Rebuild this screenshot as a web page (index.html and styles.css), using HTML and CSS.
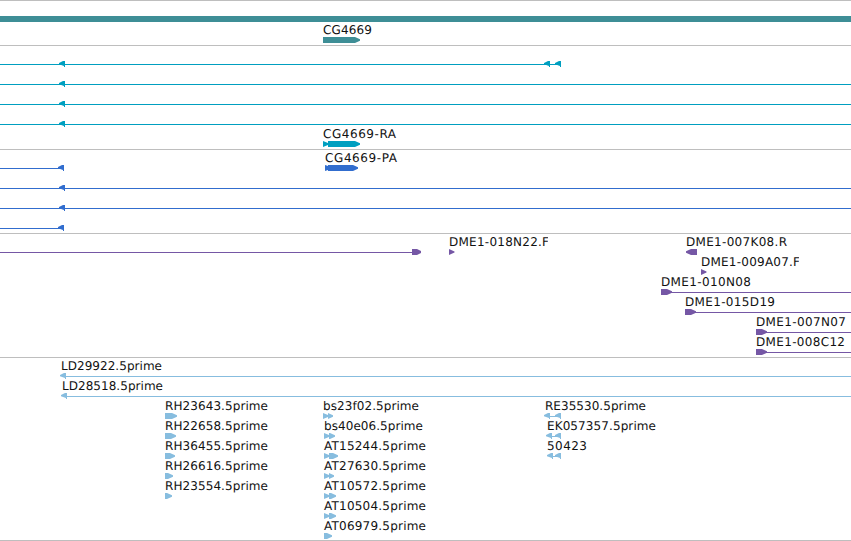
FILE: index.html
```
<!DOCTYPE html>
<html lang="en">
<head>
  <meta charset="UTF-8">
  <title>CG4669 region</title>
  <link rel="stylesheet" href="styles.css">
</head>
<body>
  <!-- exon ends, shared by all the tracks -->
  <svg class="defs" width="0" height="0">
    <defs>
      <path id="left" d="M0 2 L3 .5 L4 0 H6 V6 H5 V5 L0 3.3Z"/>
      <path id="right" d="M0 0 L5.5 2.5 V3.5 L0 6Z"/>
      <path id="box" d="M0 0 H6 L11 2.2 V3.8 L6 6 H0Z"/>
      <clipPath id="clip1"><rect x="440" y="234" width="108" height="16"/></clipPath>
      <clipPath id="clip2"><rect x="690" y="254" width="109" height="16"/></clipPath>
    </defs>
  </svg>

  <main class="tracks">
    <!-- genes -->
    <section class="track gene">
      <svg width="851" height="44" viewBox="0 1 851 44">
        <rect x="0" y="16" width="851" height="6"/>
        <text x="323" y="34" textLength="49">CG4669</text>
        <path d="M323 37 H355 L360 39.2 V40.8 L355 43 H323Z"/>
      </svg>
    </section>

    <!-- transcripts -->
    <section class="track transcript">
      <svg width="851" height="103" viewBox="0 46 851 103">
        <rect x="0" y="64" width="561" height="1"/>
        <rect x="0" y="84" width="851" height="1"/>
        <rect x="0" y="104" width="851" height="1"/>
        <rect x="0" y="124" width="851" height="1"/>
        <use href="#left" x="59" y="61"/>
        <use href="#left" x="544" y="61"/>
        <use href="#left" x="555" y="61"/>
        <use href="#left" x="59" y="81"/>
        <use href="#left" x="59" y="101"/>
        <use href="#left" x="59" y="121"/>
        <text x="323" y="138" textLength="73">CG4669-RA</text>
        <path d="M323 141 L328 143 V141 H355 L360 143.2 V144.8 L355 147 H328 V145 L323 147Z"/>
      </svg>
    </section>

    <!-- proteins -->
    <section class="track protein">
      <svg width="851" height="83" viewBox="0 150 851 83">
        <rect x="0" y="168" width="63" height="1"/>
        <rect x="0" y="188" width="851" height="1"/>
        <rect x="0" y="208" width="851" height="1"/>
        <rect x="0" y="228" width="63" height="1"/>
        <use href="#left" x="58" y="165"/>
        <use href="#left" x="59" y="185"/>
        <use href="#left" x="59" y="205"/>
        <use href="#left" x="58" y="225"/>
        <text x="325" y="162" textLength="72">CG4669-PA</text>
        <path d="M325 165 L328 166 V165 H353 L358 167.2 V168.8 L353 171 H328 V170 L325 171Z"/>
      </svg>
    </section>

    <!-- clones -->
    <section class="track clone">
      <svg width="851" height="123" viewBox="0 234 851 123">
        <rect x="0" y="252" width="413" height="1"/>
        <path d="M412 249 H417 L421 251 V253 L417 255 H412Z"/>
        <text x="449" y="246" textLength="100" clip-path="url(#clip1)">DME1-018N22.F</text>
        <use href="#right" x="449" y="249"/>
        <text x="686" y="246" textLength="101">DME1-007K08.R</text>
        <path d="M686 251.2 L691 249 H697 V255 H691 L686 252.8Z"/>
        <text x="701" y="266" textLength="99" clip-path="url(#clip2)">DME1-009A07.F</text>
        <use href="#right" x="701" y="269"/>
        <text x="661" y="286" textLength="90">DME1-010N08</text>
        <rect x="665" y="292" width="186" height="1"/>
        <use href="#box" x="661" y="289"/>
        <text x="685" y="306" textLength="90">DME1-015D19</text>
        <rect x="690" y="312" width="161" height="1"/>
        <use href="#box" x="685" y="309"/>
        <text x="756" y="326" textLength="90">DME1-007N07</text>
        <rect x="760" y="332" width="91" height="1"/>
        <use href="#box" x="756" y="329"/>
        <text x="756" y="346" textLength="89">DME1-008C12</text>
        <rect x="760" y="352" width="91" height="1"/>
        <use href="#box" x="756" y="349"/>
      </svg>
    </section>

    <!-- ESTs -->
    <section class="track est">
      <svg width="851" height="182" viewBox="0 358 851 182">
        <text x="61" y="370" textLength="101">LD29922.5prime</text>
        <rect x="65" y="376" width="786" height="1"/>
        <use href="#left" x="60" y="373"/>
        <text x="62" y="390" textLength="101">LD28518.5prime</text>
        <rect x="65" y="396" width="786" height="1"/>
        <use href="#left" x="61" y="393"/>

        <text x="165" y="410" textLength="103">RH23643.5prime</text>
        <path d="M165 413 H172 L177 415.2 V416.8 L172 419 H165Z"/>
        <text x="165" y="430" textLength="103">RH22658.5prime</text>
        <path d="M165 433 H171 L176 435.2 V436.8 L171 439 H165Z"/>
        <text x="165" y="450" textLength="103">RH36455.5prime</text>
        <path d="M165 453 H170 L175 455.2 V456.8 L170 459 H165Z"/>
        <text x="165" y="470" textLength="103">RH26616.5prime</text>
        <path d="M165 473 H168 L173 475.2 V476.8 L168 479 H165Z"/>
        <text x="165" y="490" textLength="103">RH23554.5prime</text>
        <path d="M165 493 H167 L172 495.2 V496.8 L167 499 H165Z"/>

        <text x="323" y="410" textLength="96">bs23f02.5prime</text>
        <path d="M323 413 L328 415 V413 L333 415.2 V416.8 L328 419 V417 L323 419Z"/>
        <text x="324" y="430" textLength="99">bs40e06.5prime</text>
        <path d="M324 433 L329 435 V433 H330 L335 435.2 V436.8 L330 439 H329 V437 L324 439Z"/>
        <text x="324" y="450" textLength="102">AT15244.5prime</text>
        <path d="M324 453 L329 455 V453 H333 L338 455.2 V456.8 L333 459 H329 V457 L324 459Z"/>
        <text x="324" y="470" textLength="102">AT27630.5prime</text>
        <path d="M324 473 L329 475 V473 L334 475.2 V476.8 L329 479 V477 L324 479Z"/>
        <text x="324" y="490" textLength="102">AT10572.5prime</text>
        <path d="M324 493 L329 495 V493 H331 L336 495.2 V496.8 L331 499 H329 V497 L324 499Z"/>
        <text x="324" y="510" textLength="102">AT10504.5prime</text>
        <path d="M324 513 L329 515 V513 H331 L336 515.2 V516.8 L331 519 H329 V517 L324 519Z"/>
        <text x="324" y="530" textLength="102">AT06979.5prime</text>
        <path d="M324 533 H327 L332 535.2 V536.8 L327 539 H324Z"/>

        <text x="545" y="410" textLength="101">RE35530.5prime</text>
        <rect x="549" y="416" width="8" height="1"/>
        <use href="#left" x="544" y="413"/>
        <use href="#left" x="555" y="413"/>
        <text x="547" y="430" textLength="109">EK057357.5prime</text>
        <rect x="551" y="436" width="6" height="1"/>
        <use href="#left" x="546" y="433"/>
        <use href="#left" x="555" y="433"/>
        <text x="547" y="450" textLength="40">50423</text>
        <rect x="552" y="456" width="6" height="1"/>
        <use href="#left" x="547" y="453"/>
        <use href="#left" x="555" y="453"/>
      </svg>
    </section>
  </main>
</body>
</html>
```
FILE: styles.css
```
body { margin: 0; background: #fff; overflow: hidden; }
.defs { display: block; }
.tracks { display: flex; flex-direction: column; width: 851px; border-bottom: 1px solid #bebebe; }
.track { border-top: 1px solid #bebebe; }
.track svg { display: block; }
.track text { font-family: "DejaVu Sans", sans-serif; font-size: 12px; fill: #111; text-rendering: geometricPrecision; }

.gene { fill: #3e8e96; }
.transcript { fill: #009fc0; }
.protein { fill: #316dce; }
.clone { fill: #7557a5; }
.est { fill: #87bddf; }
```
